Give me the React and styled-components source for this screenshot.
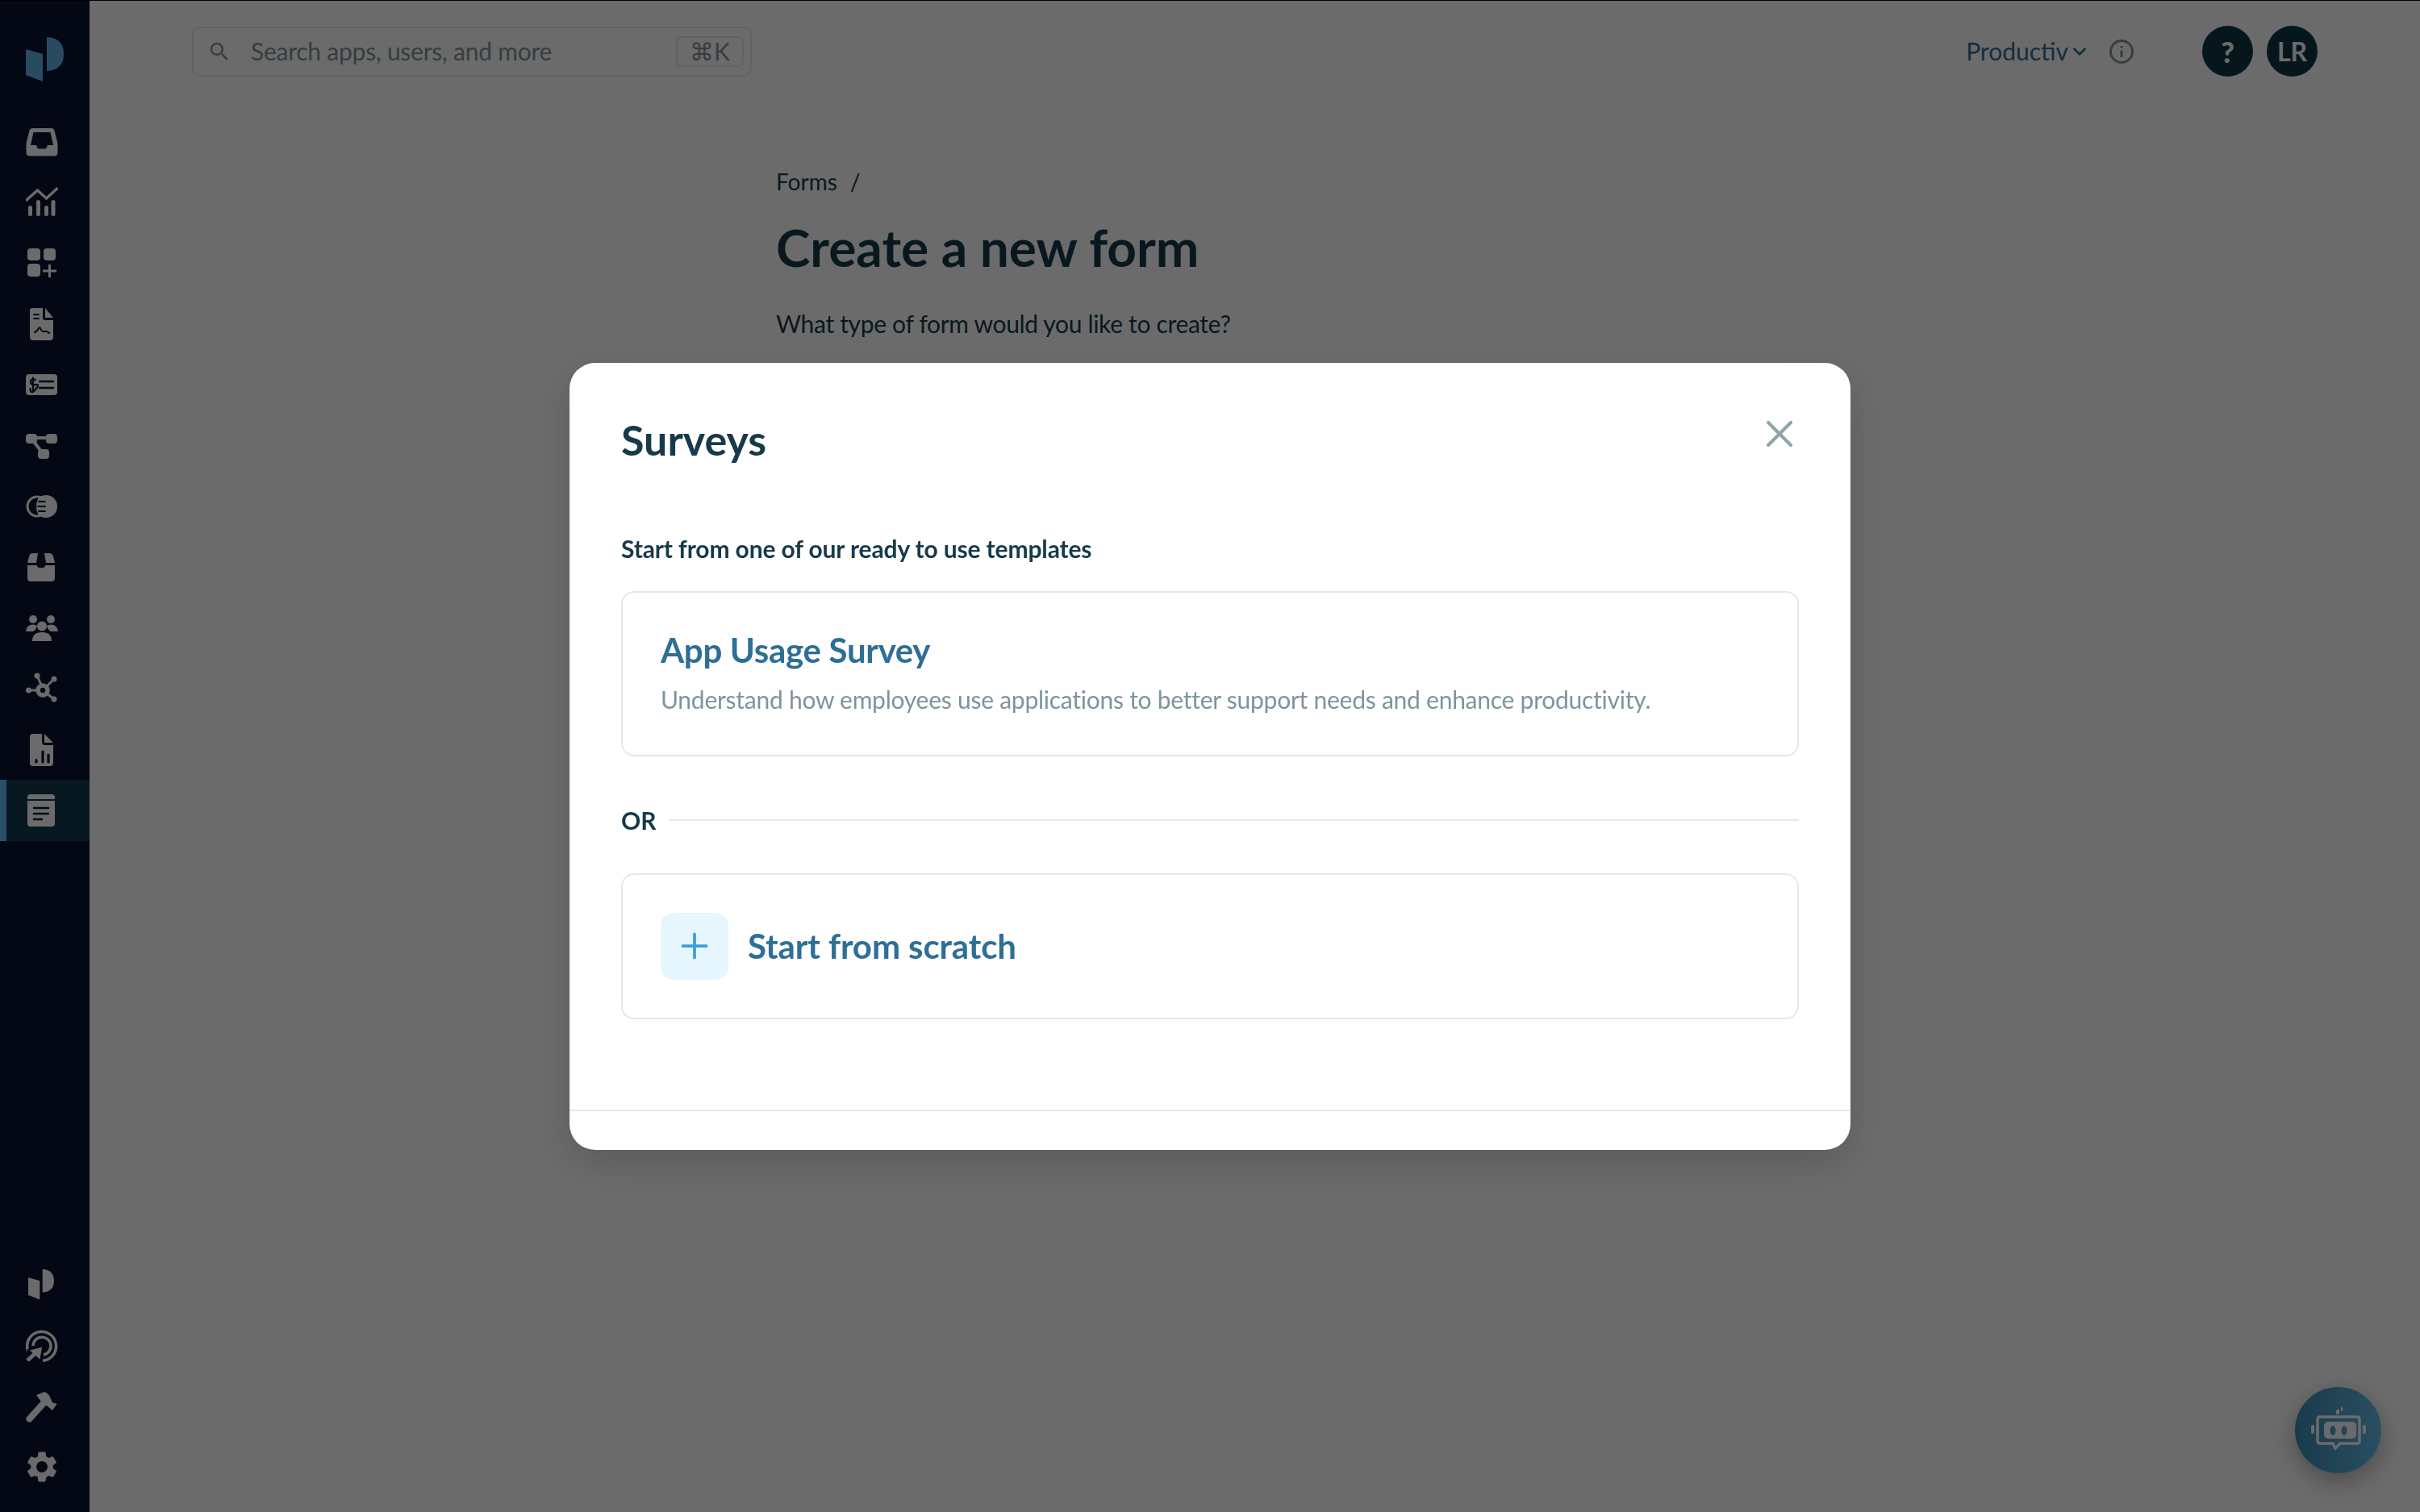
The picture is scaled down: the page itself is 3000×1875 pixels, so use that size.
import React from 'react'
import styled, { createGlobalStyle } from 'styled-components'
import { ChevronDown, Plus, X } from 'lucide-react'
import { MdSearch, MdSettings } from 'react-icons/md'

const navy = '#0a1334'
const ink = '#173a4a'
const link = '#2e6f96'
const muted = '#7e949c'
const line = '#e6e8e8'

const GlobalStyle = createGlobalStyle`
  html, body { margin: 0; padding: 0; background: #fff; }
  * { box-sizing: border-box; }
  body { font-family: Lato, "Noto Sans", sans-serif; color: ${ink}; }
`

const Page = styled.div`
  display: flex;
  width: 3000px;
  height: 1875px;
  border-top: 1px solid #000;
  overflow: hidden;
`

const Sidebar = styled.nav`
  width: 111px;
  flex: none;
  background: ${navy};
  display: flex;
  flex-direction: column;
  padding-top: 137px;
  padding-bottom: 18px;
`

const NavItem = styled.div`
  height: 75.4px;
  display: flex;
  align-items: center;
  padding-left: 32px;
  color: #fff;
  flex: none;
  background: ${p => (p.$active ? '#13394c' : 'transparent')};
  box-shadow: ${p => (p.$active ? 'inset 8px 0 0 #64bef8' : 'none')};
`

const NavSpacer = styled.div`
  flex: 1;
`

const Main = styled.main`
  flex: 1;
  min-width: 0;
`

const Header = styled.header`
  display: flex;
  align-items: center;
  justify-content: space-between;
  padding: 31px 127px 0;
`

const SearchBox = styled.div`
  width: 694px;
  height: 62px;
  border: 2px solid ${line};
  border-radius: 10px;
  display: flex;
  align-items: center;
  padding: 0 8px 0 17px;
  color: ${muted};
  font-size: 30px;
`

const SearchText = styled.span`
  flex: 1;
  margin: -2px 0 0 24px;
  letter-spacing: -0.24px;
`

const Kbd = styled.span`
  width: 84px;
  height: 38px;
  border: 2px solid ${line};
  border-radius: 8px;
  display: flex;
  align-items: center;
  justify-content: center;
  font-size: 30px;
  font-family: Lato, "DejaVu Sans", sans-serif;
`

const HeaderRight = styled.div`
  display: flex;
  align-items: center;
`

const Tenant = styled.span`
  color: ${link};
  font-size: 30px;
  display: flex;
  align-items: center;
  margin-top: -1px;
`

const TenantCaret = styled(ChevronDown)`
  margin: 2px 0 0 1px;
`

const InfoIcon = styled.svg`
  margin-left: 23px;
  margin-right: 84px;
  color: ${muted};
`

const Circle = styled.div`
  width: 63px;
  height: 63px;
  border-radius: 50%;
  background: #0f3547;
  color: #fff;
  font-weight: ${p => p.$weight || 700};
  font-size: ${p => p.$size || 32}px;
  display: flex;
  align-items: center;
  justify-content: center;
  margin-left: ${p => p.$gap || 0}px;
`

const Content = styled.section`
  padding: 110px 0 0 851px;
`

const Crumbs = styled.div`
  font-size: 28px;
  line-height: 40px;
  color: ${ink};
  display: flex;
  gap: 16px;
`

const PageTitle = styled.h1`
  margin: 22px 0 0;
  font-size: 64px;
  line-height: 80px;
  font-weight: 700;
  color: ${ink};
`

const Question = styled.p`
  margin: 34px 0 0;
  font-size: 30px;
  line-height: 40px;
  letter-spacing: -0.33px;
  color: ${ink};
`

const Overlay = styled.div`
  position: fixed;
  inset: 0;
  background: rgba(0, 0, 0, 0.58);
  display: flex;
  align-items: center;
  justify-content: center;
`

const Modal = styled.div`
  width: 1588px;
  height: 976px;
  background: #fff;
  border-radius: 32px;
  box-shadow: 0 16px 48px rgba(0, 0, 0, 0.16);
  padding: 64px 64px 0;
  display: flex;
  flex-direction: column;
  position: relative;
`

const ModalHead = styled.div`
  display: flex;
  justify-content: space-between;
`

const ModalTitle = styled.h2`
  margin: 0;
  font-size: 52px;
  line-height: 62px;
  font-weight: 700;
  color: ${ink};
`

const CloseButton = styled.button`
  border: 0;
  background: none;
  padding: 0;
  width: 56px;
  height: 56px;
  margin: -4px -4px -10px 0;
  color: #8fa3a8;
  display: flex;
`

const SectionLabel = styled.div`
  margin-top: 84px;
  font-size: 30px;
  line-height: 40px;
  font-weight: 700;
  letter-spacing: -0.13px;
  color: ${ink};
`

const Card = styled.div`
  border: 2px solid ${line};
  border-radius: 16px;
`

const TemplateCard = styled(Card)`
  margin-top: 33px;
  height: 205px;
  padding: 45px 47px 0;
`

const CardTitle = styled.div`
  font-size: 42px;
  line-height: 52px;
  font-weight: 700;
  letter-spacing: ${p => p.$spacing || 0}px;
  color: ${link};
`

const CardText = styled.div`
  margin-top: 15px;
  font-size: 30px;
  line-height: 40px;
  letter-spacing: -0.25px;
  color: ${muted};
`

const OrRow = styled.div`
  margin-top: 59px;
  display: flex;
  align-items: center;
  gap: 15px;
  font-size: 30px;
  line-height: 40px;
  font-weight: 700;
  color: ${ink};

  &::after {
    content: '';
    flex: 1;
    height: 2px;
    margin-top: 1px;
    background: ${line};
  }
`

const ScratchCard = styled(Card)`
  margin-top: 46px;
  height: 181px;
  padding: 0 47px;
  display: flex;
  align-items: center;
  gap: 24px;
`

const PlusBox = styled.div`
  width: 84px;
  height: 83px;
  border-radius: 16px;
  background: #e6f6fe;
  color: #3f9fd6;
  display: flex;
  align-items: center;
  justify-content: center;
`

const ModalFooter = styled.div`
  position: absolute;
  left: 0;
  right: 0;
  bottom: 48px;
  border-top: 2px solid ${line};
`

const BotButton = styled.div`
  position: fixed;
  right: 48px;
  bottom: 48px;
  width: 107px;
  height: 107px;
  border-radius: 50%;
  background: linear-gradient(90deg, #3e8cb4, #64bcea);
  box-shadow: 0 10px 30px rgba(0, 0, 0, 0.3);
  display: flex;
  align-items: center;
  justify-content: center;
  color: #fff;
`

const AppLogo = styled.div`
  position: absolute;
  top: 46px;
  left: 32px;
  line-height: 0;
`

const Glyph = ({ children }) => (
  <svg width="40" height="40" viewBox="0 0 40 40" fill="currentColor">
    {children}
  </svg>
)

// knocked-out detail inside the filled nav icons
const Cut = ({ d, w = 2.4 }) => (
  <path d={d} fill="none" stroke={navy} strokeWidth={w} strokeLinecap="round" />
)

const icons = [
  <Glyph key="inbox">
    <path
      fillRule="evenodd"
      d="M8 3H32Q34.5 3 35.4 5.5L39.5 22V33Q39.5 37.5 35 37.5H5Q.5 37.5.5 33V22L4.6 5.5Q5.5 3 8 3ZM9.5 8 6 24H13Q14.5 28.5 16 28.5H24Q25.5 28.5 27 24H34L30.5 8Z"
    />
  </Glyph>,
  <Glyph key="chart">
    <path d="M1 17 14.5 5 25.5 15 38.5 3" fill="none" stroke="currentColor" strokeWidth="3.4" strokeLinecap="round" />
    <rect x="3" y="24" width="5" height="13" rx="2.5" />
    <rect x="13" y="17" width="5" height="20" rx="2.5" />
    <rect x="23" y="24" width="5" height="13" rx="2.5" />
    <rect x="31.5" y="17" width="5" height="20" rx="2.5" />
  </Glyph>,
  <Glyph key="apps">
    <rect x="2" y="2" width="16" height="15" rx="4" />
    <rect x="22" y="2" width="15" height="15" rx="4" />
    <rect x="2" y="21" width="16" height="16" rx="4" />
    <path d="M29.5 22V38M21 30H38" stroke="currentColor" strokeWidth="3" fill="none" />
  </Glyph>,
  <Glyph key="contract">
    <path d="M8 0H21V12Q21 15 24 15H34V36Q34 40 30 40H9Q5 40 5 36V3Q5 0 8 0ZM24 0 34 12H24Z" />
    <Cut d="M10 8H16M10 13H16" w={2} />
    <Cut d="M11 30Q14 29 16 25 18 23 19 27 20 30 23 29T29 31" w={2} />
  </Glyph>,
  <Glyph key="expense">
    <rect x="0" y="7" width="39" height="26" rx="4" />
    <Cut d="M12 14Q6 12 6 16.500T12 20 12 26 5.500 25M9 11.500V28" w={2.2} />
    <Cut d="M17 16H34M17 24H34" w={2.4} />
  </Glyph>,
  <Glyph key="flow">
    <rect x="0" y="5" width="14" height="12" rx="4" />
    <rect x="25" y="5" width="14" height="12" rx="4" />
    <rect x="15" y="24" width="14" height="12" rx="4" />
    <path d="M10 10H30M8 12 20 28" fill="none" stroke="currentColor" strokeWidth="4" />
  </Glyph>,
  <Glyph key="coin">
    <circle cx="14" cy="20" r="12" fill="none" stroke="currentColor" strokeWidth="3" />
    <circle cx="25" cy="20" r="14" />
    <Cut d="M14 10.500Q10 20 14 29.500" w={2} />
    <Cut d="M16 14H24M15 20H24M16 26H24" w={1.8} />
  </Glyph>,
  <Glyph key="box">
    <path d="M9 3H15L13 15H2L4 7Q5 3 9 3ZM23 3H29Q33 3 34 7L36 15H25ZM2 18H14Q14 21 17 21H21Q24 21 24 18H36V34Q36 38 32 38H6Q2 38 2 34Z" />
    <path d="M16 3H22L23 16Q23 18 21 18H17Q15 18 15 16Z" fill={navy} />
  </Glyph>,
  <Glyph key="people">
    <circle cx="9" cy="9" r="5" />
    <circle cx="31" cy="9" r="5" />
    <circle cx="20" cy="17.5" r="6" />
    <path d="M0 24Q1 15.500 9 15.500 12 15.500 14 17 13 22 9 24ZM40 24Q39 15.500 31 15.500 28 15.500 26 17 27 22 31 24ZM8 36Q8 25 20 25T32 36Z" />
  </Glyph>,
  <Glyph key="hub">
    <circle cx="21" cy="22" r="6" fill="none" stroke="currentColor" strokeWidth="5.500" />
    <circle cx="14" cy="4" r="3.5" />
    <circle cx="35" cy="8" r="3.5" />
    <circle cx="3.5" cy="22" r="3.5" />
    <circle cx="35" cy="33" r="3.5" />
    <path d="M14 4 19 15M35 8 26 17M4 22H14M35 33 26 26" fill="none" stroke="currentColor" strokeWidth="3" />
  </Glyph>,
  <Glyph key="report">
    <path d="M9 0H20V10Q20 14 24 14H34V36Q34 40 30 40H9Q5 40 5 36V4Q5 0 9 0ZM23 0 34 11H23Z" />
    <Cut d="M13 32.500V35M21 22V35M28 26V35" w={3.2} />
  </Glyph>,
  <Glyph key="forms">
    <path d="M6 0H32Q36 0 36 4V6H2V4Q2 0 6 0ZM2 8H36V36Q36 40 32 40H6Q2 40 2 36Z" />
    <Cut d="M10 17H28M10 24H28M10 31H20" w={2.4} />
  </Glyph>,
]

const LogoMark = ({ width, height, color }) => (
  <svg width={width} height={height} viewBox="0 0 47 55" fill={color}>
    <path d="M0 15 21 21V55L0 47Z" />
    <path d="M26 0Q47 1 47 21T26 42Z" />
  </svg>
)

const footerIcons = [
  <Glyph key="mark">
    <g transform="translate(3 1) scale(.68)">
      <path d="M0 15 21 21V55L0 47Z" />
      <path d="M26 0Q47 1 47 21T26 42Z" />
    </g>
  </Glyph>,
  <Glyph key="target">
    <path d="M2.500 26A18 18 0 1 1 21 38.300" fill="none" stroke="currentColor" strokeWidth="3.500" />
    <path d="M9 20A11 11 0 1 1 22 31" fill="none" stroke="currentColor" strokeWidth="3.500" />
    <path d="M21.500 20 3 25 18 38.700Z" stroke={navy} strokeWidth="2" />
    <path d="M12 29 2 38" stroke="currentColor" strokeWidth="5" />
  </Glyph>,
  <Glyph key="hammer">
    <path d="M4.500 35.500 23 15" stroke="currentColor" strokeWidth="8" strokeLinecap="round" />
    <path d="M13 6 23 2Q28 4 29.700 7.700L33 15.300 38.700 17 33 25 26.300 19.300 21.300 17.700 18 12.700Z" />
  </Glyph>,
]

const Robot = () => (
  <svg width="68" height="68" viewBox="0 0 68 68" fill="none">
    <path d="M31 9 35 7V14H31Z" fill="currentColor" />
    <path d="M37 4Q42 7 37 11Z" fill="currentColor" />
    <path
      d="M11 17H57Q60 17 60 20V47Q60 50 57 50H36L30 56 27 50H11Q8 50 8 47V20Q8 17 11 17Z"
      stroke="currentColor"
      strokeWidth="3.5"
    />
    <rect x="16" y="23" width="40" height="21" rx="5" fill="currentColor" />
    <ellipse cx="27" cy="34" rx="3.5" ry="6" fill="#4b9cc6" />
    <ellipse cx="41" cy="34" rx="3.5" ry="6" fill="#55a8d4" />
    <rect x="0" y="27" width="4" height="11" rx="2" fill="currentColor" />
    <rect x="64" y="27" width="4" height="11" rx="2" fill="currentColor" />
  </svg>
)

export default function App() {
  return (
    <>
      <GlobalStyle />
      <Page>
        <Sidebar>
          <AppLogo>
            <LogoMark width={47} height={55} color="#5fb4ea" />
          </AppLogo>
          {icons.map((icon, i) => (
            <NavItem key={i} $active={i === icons.length - 1}>
              {icon}
            </NavItem>
          ))}
          <NavSpacer />
          {footerIcons.map((icon, i) => (
            <NavItem key={i}>{icon}</NavItem>
          ))}
          <NavItem>
            <MdSettings size={46} style={{ marginLeft: -3 }} />
          </NavItem>
        </Sidebar>
        <Main>
          <Header>
            <SearchBox>
              <MdSearch size={30} />
              <SearchText>Search apps, users, and more</SearchText>
              <Kbd>⌘K</Kbd>
            </SearchBox>
            <HeaderRight>
              <Tenant>
                Productiv
                <TenantCaret size={26} strokeWidth={2.6} />
              </Tenant>
              <InfoIcon width="32" height="32" viewBox="0 0 32 32" fill="none" stroke="currentColor" strokeWidth="3">
                <circle cx="16" cy="16" r="13.5" />
                <path d="M16 14.500V23" />
                <path d="M16 9V11.500" />
              </InfoIcon>
              <Circle $size={36} $weight={900}>?</Circle>
              <Circle $gap={17}>LR</Circle>
            </HeaderRight>
          </Header>
          <Content>
            <Crumbs>
              <span>Forms</span>
              <span>/</span>
            </Crumbs>
            <PageTitle>Create a new form</PageTitle>
            <Question>What type of form would you like to create?</Question>
          </Content>
        </Main>
      </Page>
      <BotButton>
        <Robot />
      </BotButton>
      <Overlay>
        <Modal>
          <ModalHead>
            <ModalTitle>Surveys</ModalTitle>
            <CloseButton>
              <X size={56} strokeWidth={1.75} />
            </CloseButton>
          </ModalHead>
          <SectionLabel>Start from one of our ready to use templates</SectionLabel>
          <TemplateCard>
            <CardTitle $spacing={-0.3}>App Usage Survey</CardTitle>
            <CardText>Understand how employees use applications to better support needs and enhance productivity.</CardText>
          </TemplateCard>
          <OrRow>OR</OrRow>
          <ScratchCard>
            <PlusBox>
              <Plus size={50} strokeWidth={1.8} />
            </PlusBox>
            <CardTitle $spacing={-0.1}>Start from scratch</CardTitle>
          </ScratchCard>
          <ModalFooter />
        </Modal>
      </Overlay>
    </>
  )
}
